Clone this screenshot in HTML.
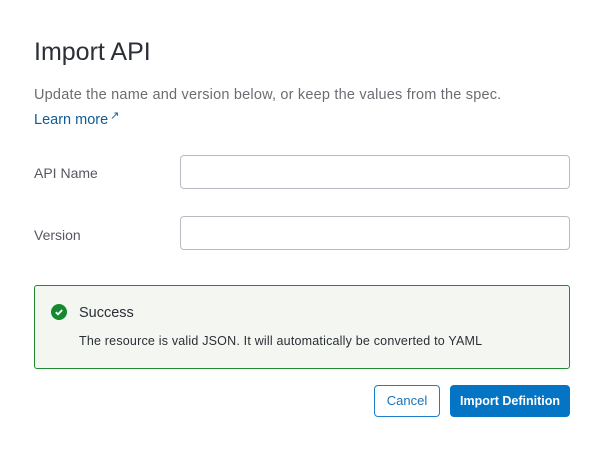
<!DOCTYPE html>
<html><head><style>
body{margin:0;width:606px;height:452px;background:#fff;font-family:"Liberation Sans",sans-serif;position:relative;overflow:hidden}
.a{position:absolute}
h1{position:absolute;left:34px;top:38px;margin:0;font-weight:400;font-size:25px;color:#2b2f36}
.inp{position:absolute;left:180px;width:388px;height:32px;border:1px solid #b8bcc2;border-radius:4px}
</style></head><body>
<h1>Import API</h1>
<div class="a" style="left:34px;top:87px;font-size:14.5px;letter-spacing:0.2px;color:#6a6e73">Update the name and version below, or keep the values from the spec.</div>
<div class="a" style="left:34px;top:112px;font-size:14.5px;color:#0f5c96">Learn more<span style="font-size:11px;position:relative;top:-5px;margin-left:2px">↗</span></div>
<div class="a" style="left:34px;top:165px;font-size:14px;color:#55595f">API Name</div>
<div class="inp" style="top:155px"></div>
<div class="a" style="left:34px;top:227px;font-size:14px;color:#55595f">Version</div>
<div class="inp" style="top:216px"></div>
<div class="a" style="left:34px;top:285px;width:534px;height:82px;border:1px solid #1f8a2f;border-radius:3px;background:#f4f6f1"></div>
<svg class="a" style="left:51px;top:304px" width="16" height="16"><circle cx="8" cy="8" r="8" fill="#138a2e"/><path d="M4.8 8.2l2.2 2.1 4.2-4.3" stroke="#fff" stroke-width="1.8" fill="none"/></svg>
<div class="a" style="left:79px;top:305px;font-size:14.5px;color:#2b2f36">Success</div>
<div class="a" style="left:79px;top:334px;font-size:12.5px;letter-spacing:0.2px;color:#2b2f36">The resource is valid JSON. It will automatically be converted to YAML</div>
<div class="a" style="left:374px;top:385px;width:64px;height:30px;border:1px solid #1a7fcc;border-radius:4px;color:#1a72b8;font-size:13px;text-align:center;line-height:30px">Cancel</div>
<div class="a" style="left:450px;top:385px;width:120px;height:32px;background:#0474c4;border-radius:4px;color:#fff;font-size:12.5px;font-weight:700;text-align:center;line-height:32px">Import Definition</div>
</body></html>
